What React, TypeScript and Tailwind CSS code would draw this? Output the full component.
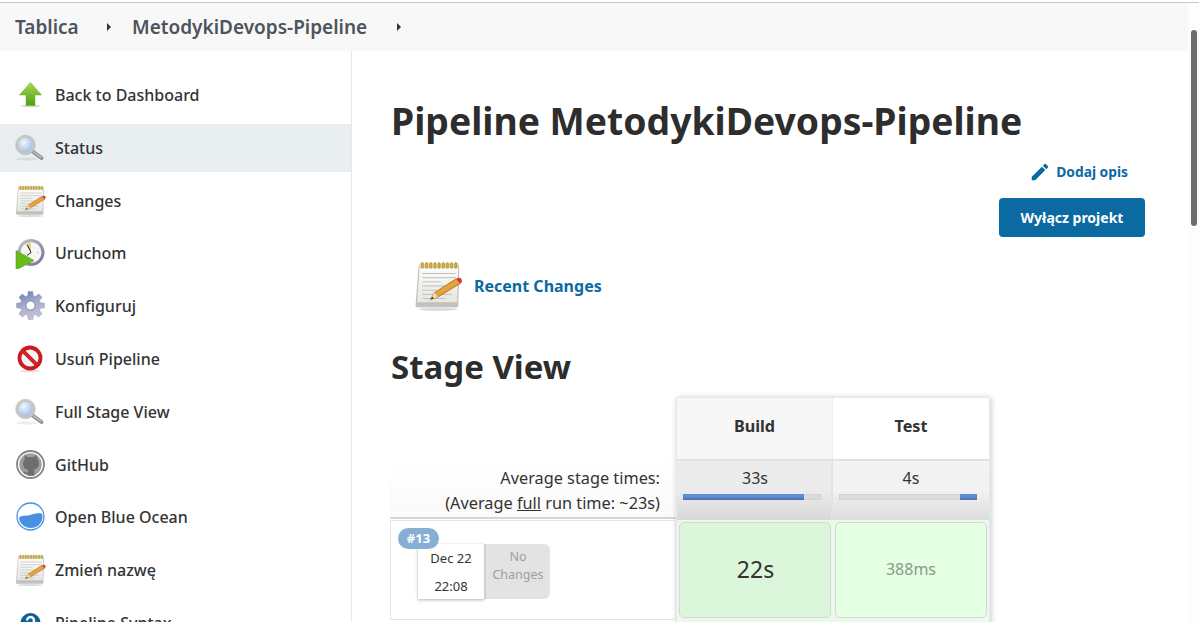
import React from "react";

const Notepad = ({ s = 32 }: { s?: number }) => (
  <svg width={s} height={s} viewBox="0 0 48 48" className="shrink-0">
    <defs>
      <linearGradient id="np" x1="0" y1="0" x2="0" y2="1">
        <stop offset="0" stopColor="#fdfdfb" />
        <stop offset="1" stopColor="#e2e2de" />
      </linearGradient>
    </defs>
    <ellipse cx="23" cy="46.4" rx="19" ry="1.5" fill="#000" opacity=".14" />
    <path d="M5 5h38l-1 38q0 1-1 1H3q-1 0-1-1z" fill="url(#np)" stroke="#a8a8a4" strokeWidth=".8" />
    <path d="M2.4 39.5h39.5v3.5q0 1-1 1H3q-1 0-1-1z" fill="#c2c2bd" />
    <path d="M5 2.5h38V7H5z" fill="#e6dcae" />
    {[8, 12, 16, 20, 24, 28, 32, 36, 40].map((x) => (
      <rect key={x} x={x - 1} y="1.5" width="2.2" height="5.5" rx="1" fill="#cfae3e" stroke="#8a7226" strokeWidth=".35" />
    ))}
    <path d="M8 12h32M8 16h32M8 20h18M8 24h26M8 28h14M8 32h28M8 36h22" stroke="#bcbcb9" strokeWidth=".9" />
    <path d="M16 37l3.5-6.5 21-13.5 4 4.5-21.5 13z" fill="#e8a23a" stroke="#93621a" strokeWidth=".7" />
    <path d="M19.5 30.5L16 37l7-2.5z" fill="#f3dcae" />
    <path d="M16 37l1.3-2.6 1.9 1.4z" fill="#3a2a10" />
    <path d="M40.5 17q3.5-2 5 .2t-1 4.3z" fill="#d8323a" />
  </svg>
);

const Search = () => (
  <svg width="32" height="32" viewBox="0 0 32 32" className="shrink-0">
    <defs>
      <radialGradient id="lens" cx=".4" cy=".35" r=".8">
        <stop offset="0" stopColor="#f0f6fc" />
        <stop offset="1" stopColor="#86aedd" />
      </radialGradient>
    </defs>
    <ellipse cx="12" cy="27" rx="11" ry="1.6" fill="#000" opacity=".07" />
    <path d="M17 19l9.5 7" stroke="#8c8c8c" strokeWidth="3.8" strokeLinecap="round" />
    <path d="M18 19.5l8 5.8" stroke="#c8c8c8" strokeWidth="1.3" strokeLinecap="round" />
    <circle cx="10.5" cy="13" r="8.4" fill="url(#lens)" stroke="#c6c6c6" strokeWidth="2.4" />
    <circle cx="10.5" cy="13" r="9.8" fill="none" stroke="#a5a5a5" strokeWidth=".5" />
  </svg>
);

const ArrowUp = () => (
  <svg width="32" height="32" viewBox="0 0 32 32" className="shrink-0">
    <defs>
      <linearGradient id="ar" x1="0" y1="0" x2="0" y2="1">
        <stop offset="0" stopColor="#a6d957" />
        <stop offset="1" stopColor="#4f9e10" />
      </linearGradient>
    </defs>
    <ellipse cx="15.5" cy="27" rx="10" ry="1.3" fill="#000" opacity=".15" />
    <path d="M15.5 3.5L26.5 16H20v10.5h-9V16H4.500z" fill="url(#ar)" stroke="#68ad24" strokeWidth=".5" />
  </svg>
);

const Clock = () => (
  <svg width="32" height="32" viewBox="0 0 32 32" className="shrink-0">
    <defs>
      <linearGradient id="rim" x1="0" y1="0" x2="1" y2="1">
        <stop offset="0" stopColor="#c3c3d3" />
        <stop offset="1" stopColor="#70708f" />
      </linearGradient>
    </defs>
    <circle cx="16" cy="15.500" r="13.500" fill="url(#rim)" />
    <circle cx="16" cy="15.500" r="10.500" fill="#f6f6f2" />
    <path d="M16 15.500V5a10.500 10.500 0 0 0-6 2z" fill="#e6d48e" />
    <path d="M16 15.500L12.500 8M16 15.500l-4 3" stroke="#222" strokeWidth="1" />
    <circle cx="23" cy="15.500" r=".8" fill="#bbb" />
    <path d="M1 13.500L19 23.500 1 33z" fill="#69bd18" stroke="#459312" strokeWidth=".5" />
  </svg>
);

const gearPoints = (() => {
  const pts: string[] = [];
  const n = 8;
  const cx = 15.5;
  const cy = 15.5;
  for (let i = 0; i < n; i++) {
    const a = (i / n) * Math.PI * 2 - Math.PI / 2;
    const w = Math.PI / n;
    const at = (r: number, t: number) => `${(cx + r * Math.cos(t)).toFixed(2)},${(cy + r * Math.sin(t)).toFixed(2)}`;
    pts.push(at(10.2, a - w * 0.75), at(14.2, a - w * 0.42), at(14.2, a + w * 0.42), at(10.2, a + w * 0.75));
  }
  return pts.join(" ");
})();

const Gear = () => (
  <svg width="32" height="32" viewBox="0 0 32 32" className="shrink-0">
    <defs>
      <linearGradient id="gr" x1="0" y1="0" x2="0.4" y2="1">
        <stop offset="0" stopColor="#6476ad" />
        <stop offset=".55" stopColor="#a9aed0" />
        <stop offset="1" stopColor="#c2bfd6" />
      </linearGradient>
    </defs>
    <polygon points={gearPoints} fill="url(#gr)" stroke="#8d90b0" strokeWidth=".4" strokeLinejoin="round" />
    <circle cx="15.5" cy="15.500" r="4.600" fill="#fff" stroke="#8484a4" strokeWidth="1" />
  </svg>
);

const NoEntry = () => (
  <svg width="32" height="32" viewBox="0 0 32 32" className="shrink-0">
    <ellipse cx="15" cy="28" rx="10" ry="1.3" fill="#000" opacity=".12" />
    <circle cx="15" cy="15" r="10.500" fill="#f6f6f6" stroke="#cc1a20" strokeWidth="3.800" />
    <path d="M7.800 7.800L22.200 22.200" stroke="#d2242a" strokeWidth="4" />
  </svg>
);

const GitHubIcon = () => (
  <svg width="32" height="32" viewBox="0 0 32 32" className="shrink-0">
    <circle cx="15.500" cy="15.500" r="13.500" fill="#fff" stroke="#858585" strokeWidth="1.800" />
    <circle cx="15.500" cy="15.500" r="11.200" fill="#9e9e9e" />
    <path d="M9.500 6l3.300 2.300a9 9 0 0 1 5.400 0L21.500 6l.9 4.300c1.100 1.300 1.600 2.700 1.600 4.200 0 3.900-2.500 5.700-5.500 6.100.7.700.9 1.500.9 2.500v3.600h-6.800v-1.800c-2.500.5-3.600-.7-4.300-2.200l1.100-.2c.7 1 1.500 1.400 3.200 1.100 0-.9.200-1.900.9-2.800-3-.4-5.500-2.200-5.500-6.100 0-1.500.5-2.900 1.600-4.200z" fill="#6e6e6e" />
  </svg>
);

const Ocean = () => (
  <svg width="32" height="32" viewBox="0 0 32 32" className="shrink-0">
    <circle cx="15.500" cy="15.500" r="13.500" fill="#fff" stroke="#4a90e2" strokeWidth="1.300" />
    <path d="M4 16.500c3-2.200 6-1.500 9-2s7-2.800 13.900-2c.6 1.200.6 2.200.6 3.200 0 6.300-5.200 11.300-11.500 11.300S4 22.300 4 16.500z" fill="#4a90e2" />
  </svg>
);

const Help = () => (
  <svg width="32" height="32" viewBox="0 0 32 32" className="shrink-0">
    <circle cx="15.500" cy="16" r="10" fill="#0f5f94" />
    <path d="M12 13.500a3.500 3.500 0 1 1 5.500 2.900c-1.200.8-2 1.400-2 2.800" fill="none" stroke="#fff" strokeWidth="2.400" />
  </svg>
);

const Tri = () => <span className="w-0 h-0 border-y-[4px] border-y-transparent border-l-[4px] border-l-[#333]" />;

const items: { label: string; icon: React.ReactNode; active?: boolean }[] = [
  { label: "Back to Dashboard", icon: <ArrowUp /> },
  { label: "Status", icon: <Search />, active: true },
  { label: "Changes", icon: <Notepad /> },
  { label: "Uruchom", icon: <Clock /> },
  { label: "Konfiguruj", icon: <Gear /> },
  { label: "Usuń Pipeline", icon: <NoEntry /> },
  { label: "Full Stage View", icon: <Search /> },
  { label: "GitHub", icon: <GitHubIcon /> },
  { label: "Open Blue Ocean", icon: <Ocean /> },
  { label: "Zmień nazwę", icon: <Notepad /> },
  { label: "Pipeline Syntax", icon: <Help /> },
];

export default function App() {
  return (
    <div className="h-[622px] overflow-hidden bg-white text-[#333] font-['Noto_Sans',sans-serif]">
      <div className="h-[2px]" />
      <div className="h-px bg-[#c8c8c8]" />
      <div className="flex h-[619px]">
        <div className="w-[1188px] flex flex-col">
          <nav className="h-[48px] shrink-0 bg-[#f8f8f8] flex items-center text-[19px] font-semibold text-[#4d545d]">
            <span className="ml-[15px] w-[92px]">Tablica</span>
            <Tri />
            <span className="ml-[21px] w-[265px] whitespace-nowrap">MetodykiDevops-Pipeline</span>
            <Tri />
          </nav>
          <div className="flex flex-1 min-h-0">
            <aside className="w-[352px] shrink-0 border-r border-[#e8e8e8] pt-[20px] overflow-hidden">
              {items.map((it) => (
                <div key={it.label} className={`h-[48px] mb-[4.8px] flex items-center pl-[15px] gap-[8px] text-[16px] font-medium ${it.active ? "bg-[#e9eef1]" : ""}`}>
                  {it.icon}
                  <span>{it.label}</span>
                </div>
              ))}
            </aside>
            <main className="flex-1 min-w-0 pl-[39px] pt-[46px] overflow-hidden">
              <h1 className="text-[37.3px] leading-[48px] font-bold text-[#2d2d2d] whitespace-nowrap">Pipeline MetodykiDevops-Pipeline</h1>
              <div className="w-[754px] flex flex-col items-end mt-[13px]">
                <div className="mr-[17px] h-[28px] flex items-center gap-[5px] text-[13.8px] font-bold text-[#0b6aa2]">
                  <svg width="22" height="22" viewBox="0 0 24 24" fill="#0b6aa2">
                    <path d="M3 17.25V21h3.75L17.81 9.94l-3.75-3.75L3 17.25zM20.71 7.04a1 1 0 0 0 0-1.41l-2.34-2.34a1 1 0 0 0-1.41 0l-1.83 1.83 3.75 3.75 1.83-1.83z" />
                  </svg>
                  Dodaj opis
                </div>
                <button className="mt-[12px] w-[146px] h-[39px] rounded-[4px] bg-[#0b6aa2] text-white text-[14px] font-bold">Wyłącz projekt</button>
              </div>
              <div className="flex items-center ml-[23px] mt-[24px] gap-[10px]">
                <Notepad s={50} />
                <span className="text-[16px] font-bold text-[#0b6aa2]">Recent Changes</span>
              </div>
              <h2 className="text-[33px] leading-[44px] font-bold text-[#2d2d2d] mt-[34px]">Stage View</h2>
              <div className="flex mt-[8px] w-[600px] -ml-px">
                <div className="w-[286px] shrink-0 pt-[61px]">
                  <div className="h-[61px] pr-[16px] pb-[1px] flex flex-col justify-end items-end text-[16.3px] leading-[25px] text-[#333] bg-gradient-to-b from-white to-[#fafafa] border-b-[2px] border-[#d5d5d5]">
                    <div>Average stage times:</div>
                    <div>(Average <u>full</u> run time: ~23s)</div>
                  </div>
                  <div className="mt-[1px] h-[100px] border border-[#e4e4e4] relative">
                    <div className="absolute left-[7px] top-[7px] z-10 w-[41px] h-[21px] rounded-full bg-[#87aed5] text-white text-[13px] font-bold flex items-center justify-center">#13</div>
                    <div className="ml-[27px] mt-[23px] flex">
                      <div className="w-[66px] h-[55px] bg-white shadow-[0_1px_3px_rgba(0,0,0,.3)] flex flex-col items-center justify-between pt-[5px] pb-[4px] text-[13px] leading-[18px] text-[#333]">
                        <div>Dec 22</div>
                        <div>22:08</div>
                      </div>
                      <div className="w-[66px] h-[55px] bg-[#e3e3e3] rounded-r-[6px] flex flex-col items-center justify-center pb-[12px] text-[12.5px] leading-[18px] text-[#9e9e9e] border-l-[2px] border-[#cfcfcf]">
                        <div>No</div>
                        <div>Changes</div>
                      </div>
                    </div>
                  </div>
                </div>
                <div className="w-[314px] shrink-0 border border-[#e3ecec] shadow-[1px_1px_6px_rgba(0,0,0,.22)] h-[241px] bg-[#edf8ed]">
                  <div className="grid grid-cols-2 h-[61px] text-[16.2px] font-bold">
                    <div className="bg-[#f7f7f7] flex items-center justify-center pb-[5px] border-r border-[#eee]">Build</div>
                    <div className="bg-white flex items-center justify-center pb-[5px]">Test</div>
                  </div>
                  <div className="grid grid-cols-2 h-[61px] text-[16px]">
                    <div className="bg-gradient-to-b from-[#ececec] via-[#ebebeb] to-[#d8d8d8] border-t-[2px] border-r-[2px] border-[#e2e2e2] flex flex-col items-center pt-[7px]">
                      <div className="leading-[20px] pl-[2px]">33s</div>
                      <div className="mt-[6px] self-start ml-[6px] w-[138px] h-[6px] bg-[#dcdcdc] shadow-[inset_0_0_2px_rgba(0,0,0,.15)]">
                        <div className="h-full bg-[#5f8fd4] shadow-[inset_0_-2px_2px_rgba(0,0,70,.2)]" style={{ width: "88%" }} />
                      </div>
                    </div>
                    <div className="bg-gradient-to-b from-[#f3f3f3] via-[#f2f2f2] to-[#dcdcdc] border-t-[2px] border-[#e2e2e2] flex flex-col items-center pt-[7px]">
                      <div className="leading-[20px]">4s</div>
                      <div className="mt-[6px] self-start ml-[6px] w-[138px] h-[6px] bg-[#dcdcdc] shadow-[inset_0_0_2px_rgba(0,0,0,.15)] flex justify-end">
                        <div className="h-full bg-[#5f8fd4] shadow-[inset_0_-2px_2px_rgba(0,0,70,.2)]" style={{ width: "12.5%" }} />
                      </div>
                    </div>
                  </div>
                  <div className="grid grid-cols-2 h-[100px] bg-[#edf8ed]">
                    <div className="p-[2px]">
                      <div className="h-full rounded-[5px] border border-[#cfd8d2] bg-[#dcf6dc] flex items-center justify-center pb-[2px] pl-[1px] text-[23px] text-[#333]">22s</div>
                    </div>
                    <div className="p-[2px]">
                      <div className="h-full rounded-[5px] border border-[#cfd8d2] bg-[#e4ffe1] flex items-center justify-center pb-[2px] text-[16px] text-[#8b9a8b]">388ms</div>
                    </div>
                  </div>
                </div>
              </div>
            </main>
          </div>
        </div>
        <div className="flex-1 bg-[#fdfdfd] pt-[27px] pl-[3px]">
          <div className="w-[6px] h-[196px] rounded-full bg-[#6e6e6e]" />
        </div>
      </div>
    </div>
  );
}
